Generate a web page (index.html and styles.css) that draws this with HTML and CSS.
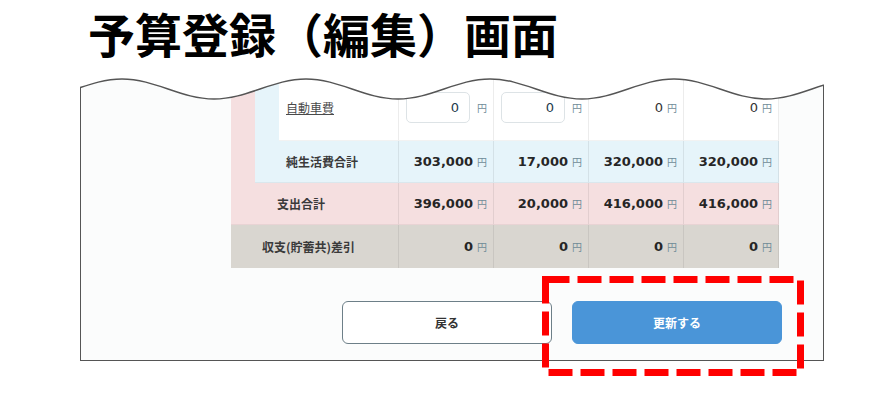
FILE: index.html
```html
<!DOCTYPE html>
<html lang="ja">
<head>
  <meta charset="UTF-8" />
  <meta name="viewport" content="width=device-width, initial-scale=1.0"/>
  <title>予算登録（編集）画面</title>
  <link rel="stylesheet" href="styles.css">
</head>
<body>

  <h1 class="title">予算登録（編集）画面</h1>

  <div class="stage">
    <div class="sheet">
      <div class="budget">
        <!-- 自動車費 -->
        <div class="row row-item">
          <div class="strip-expense"></div>
          <div class="strip-living"></div>
          <div class="cell label"><a href="#">自動車費</a></div>
          <div class="cell num"><input class="amount" type="text" value="0"><span class="yen">円</span></div>
          <div class="cell num"><input class="amount" type="text" value="0"><span class="yen">円</span></div>
          <div class="cell num"><span class="value">0</span><span class="yen">円</span></div>
          <div class="cell num"><span class="value">0</span><span class="yen">円</span></div>
        </div>

        <!-- 純生活費合計 -->
        <div class="row row-living">
          <div class="cell label label-living">純生活費合計</div>
          <div class="cell num"><span class="value total">303,000</span><span class="yen">円</span></div>
          <div class="cell num"><span class="value total">17,000</span><span class="yen">円</span></div>
          <div class="cell num"><span class="value total">320,000</span><span class="yen">円</span></div>
          <div class="cell num"><span class="value total">320,000</span><span class="yen">円</span></div>
        </div>

        <!-- 支出合計 -->
        <div class="row row-expense">
          <div class="cell label label-expense">支出合計</div>
          <div class="cell num"><span class="value total">396,000</span><span class="yen">円</span></div>
          <div class="cell num"><span class="value total">20,000</span><span class="yen">円</span></div>
          <div class="cell num"><span class="value total">416,000</span><span class="yen">円</span></div>
          <div class="cell num"><span class="value total">416,000</span><span class="yen">円</span></div>
        </div>

        <!-- 収支差引 -->
        <div class="row row-balance">
          <div class="cell label label-balance">収支(貯蓄共)差引</div>
          <div class="cell num"><span class="value total">0</span><span class="yen">円</span></div>
          <div class="cell num"><span class="value total">0</span><span class="yen">円</span></div>
          <div class="cell num"><span class="value total">0</span><span class="yen">円</span></div>
          <div class="cell num"><span class="value total">0</span><span class="yen">円</span></div>
        </div>
      </div>

      <div class="actions">
        <button class="btn btn-back" type="button">戻る</button>
        <button class="btn btn-update" type="button">更新する</button>
      </div>
    </div>

    <!-- torn top edge of the screenshot -->
    <svg class="wave" width="876" height="40" viewBox="0 0 876 40">
      <defs>
        <clipPath id="frameClip"><rect x="80" y="0" width="744" height="40"/></clipPath>
      </defs>
      <path fill="#fff" d="M0 0 L0 33 L30 33 C63.4 33 88.6 13 122 13 S180.6 33 214 33 S272.6 13 306 13 S364.6 33 398 33 S456.6 13 490 13 S548.6 33 582 33 S640.6 13 674 13 S732.6 33 766 33 S824.6 13 858 13 L876 13 L876 0 Z"/>
      <path fill="none" stroke="#555" stroke-width="1.5" clip-path="url(#frameClip)" d="M30 33 C63.4 33 88.6 13 122 13 S180.6 33 214 33 S272.6 13 306 13 S364.6 33 398 33 S456.6 13 490 13 S548.6 33 582 33 S640.6 13 674 13 S732.6 33 766 33 S824.6 13 858 13"/>
    </svg>

    <!-- highlight around the update button -->
    <svg class="marker" width="262" height="100" viewBox="0 0 262 100">
      <path fill="none" stroke="#ff0000" stroke-width="7" stroke-dasharray="24 8" d="M3.5 3.5 H258.5 V96.5 H3.5 Z"/>
    </svg>
  </div>

</body>
</html>
```

FILE: styles.css
```css
html,
body {
  min-height: 398px;
}

body {
  margin: 0;
  background: #fff;
  font-family: "DejaVu Sans", "Noto Sans CJK JP", sans-serif;
  color: #333;
}

.title {
  margin: -1px 0;
  padding-left: 88px;
  font-family: "Noto Sans CJK JP", sans-serif;
  font-size: 47px;
  line-height: 68px;
  font-weight: 700;
  color: #000;
}

.stage {
  position: relative;
  padding-bottom: 40px;
}

.sheet {
  margin-left: 80px;
  width: 742px;
  padding: 8px 0 16px;
  background: #fbfcfc;
  border: 1px solid #555;
  border-top: none;
}

.budget {
  margin-left: 150px;
  display: grid;
  grid-template-columns: 24px 24px 120px repeat(4, 95px);
  grid-template-rows: 67px 42px 42px 43px;
}

.row {
  display: contents;
}

.strip-expense {
  grid-row: span 2;
  background: #f5dfe0;
}

.strip-living {
  background: #e6f4fa;
}

.cell {
  display: flex;
  align-items: center;
  box-sizing: border-box;
  border-right: 1px solid rgba(0, 0, 0, 0.07);
  border-bottom: 1px solid rgba(0, 0, 0, 0.05);
}

.row-item .cell {
  background: #fff;
}

.row-living .cell {
  background: #e6f4fa;
}

.row-expense .cell {
  background: #f5dfe0;
}

.row-balance .cell {
  background: #d9d6d0;
  border-bottom: none;
}

.label {
  font-family: "Noto Sans CJK JP", sans-serif;
  font-size: 12px;
  font-weight: 700;
  color: #3a3a3a;
}

.row-item .label {
  padding-left: 7px;
}

.label a {
  color: #4a4a4a;
  font-weight: 400;
  text-decoration: underline;
}

.label-living {
  grid-column: span 2;
  padding-left: 31px;
}

.label-expense {
  grid-column: span 3;
  padding-left: 46px;
}

.label-balance {
  grid-column: span 3;
  padding-left: 31px;
}

.num {
  justify-content: flex-end;
  padding-right: 6px;
}

.value {
  font-size: 13px;
  color: #333;
}

.value.total {
  font-weight: 700;
  color: #262626;
}

.yen {
  margin-left: 4px;
  font-family: "Noto Sans CJK JP", sans-serif;
  font-size: 10px;
  color: #6f8b97;
}

.amount {
  width: 64px;
  height: 31px;
  box-sizing: border-box;
  margin-right: 3px;
  padding: 0 10px 0 0;
  border: 1px solid #dde3e6;
  border-radius: 5px;
  background: #fff;
  text-align: right;
  font-family: "DejaVu Sans", sans-serif;
  font-size: 13px;
  color: #1d3b4c;
}

.actions {
  display: flex;
  justify-content: flex-end;
  gap: 20px;
  margin-top: 33px;
  padding-right: 41px;
}

.btn {
  width: 210px;
  height: 43px;
  border-radius: 6px;
  font-family: "Noto Sans CJK JP", sans-serif;
  font-size: 12px;
  font-weight: 700;
}

.btn-back {
  background: #fff;
  border: 1px solid #6d7f88;
  color: #333;
}

.btn-update {
  background: #4a95d8;
  border: 1px solid #4a95d8;
  color: #fff;
}

.wave {
  position: absolute;
  top: 0;
  left: 0;
}

.marker {
  position: absolute;
  top: 210px;
  left: 542px;
  width: 262px;
  height: 100px;
  overflow: visible;
}
```
